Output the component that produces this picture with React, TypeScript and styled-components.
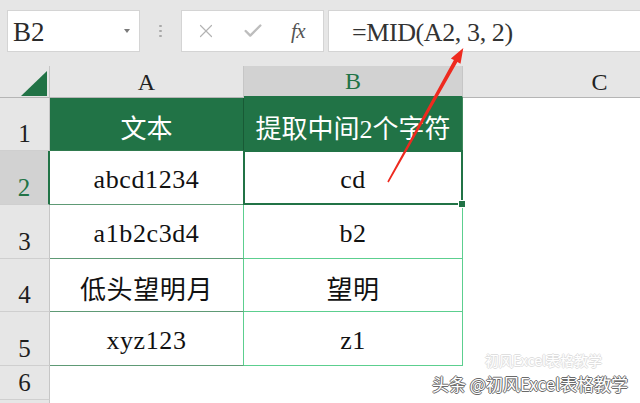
import React from "react";
import styled, { createGlobalStyle } from "styled-components";
import { X, Check } from "lucide-react";

const Global = createGlobalStyle`
  html, body { margin: 0; padding: 0; background: #ffffff; }
  body { font-family: "Liberation Serif", "Noto Sans CJK SC", serif; }
`;

const GREEN = "#217346";
const A_LINE = "#5e9a75";
const B_LINE = "#5ccf8f";
const HDR_BG = "#e6e6e6";
const HDR_SEL = "#d2d2d2";
const HDR_LINE = "#c6c6c6";

const Page = styled.div`
  position: relative;
  width: 640px;
  height: 403px;
  overflow: hidden;
  background: #fff;
`;

const Toolbar = styled.div`
  height: 66px;
  background: ${HDR_BG};
  display: flex;
  align-items: flex-start;
  padding: 10px 0 0 7px;
  box-sizing: border-box;
`;

const Box = styled.div<{ $w: number }>`
  width: ${(p) => p.$w}px;
  height: 42px;
  box-sizing: border-box;
  background: #fff;
  border: 1px solid #d4d4d4;
  display: flex;
  align-items: center;
  flex-shrink: 0;
`;

const NameText = styled.span`
  flex: 1;
  padding-left: 5px;
  padding-top: 3px;
  font-family: "Liberation Serif", serif;
  font-size: 27px;
  color: #2a2a2a;
`;

const Caret = styled.span`
  width: 0;
  height: 0;
  border-left: 3.5px solid transparent;
  border-right: 3.5px solid transparent;
  border-top: 4px solid #7a7a7a;
  margin-right: 9px;
`;

const Dots = styled.div`
  width: 41px;
  height: 42px;
  display: flex;
  flex-direction: column;
  align-items: center;
  justify-content: center;
  gap: 2.5px;
  flex-shrink: 0;
  & > span {
    width: 2.5px;
    height: 2.5px;
    border-radius: 50%;
    background: #a9a9a9;
  }
`;

const IconSlot = styled.div<{ $w: number }>`
  width: ${(p) => p.$w}px;
  display: flex;
  justify-content: center;
  align-items: center;
`;

const Fx = styled.span`
  font-family: "Liberation Serif", serif;
  font-style: italic;
  font-size: 21px;
  color: #555;
  letter-spacing: -0.5px;
`;

const Gap = styled.div`
  width: 4px;
  flex-shrink: 0;
`;

const FormulaText = styled.span`
  padding-left: 23px;
  padding-top: 4px;
  font-family: "Liberation Serif", serif;
  font-size: 26px;
  letter-spacing: -0.4px;
  color: #333;
  white-space: nowrap;
`;

const Sheet = styled.div`
  display: grid;
  grid-template-columns: 50px 194px 219px 274px;
  grid-template-rows: 32px 53px 54px 54px 53px 54px 34px 20px;
`;

const Corner = styled.div`
  background: ${HDR_BG};
  border-right: 1px solid ${HDR_LINE};
  border-bottom: 1px solid #b5b5b5;
  box-sizing: border-box;
  display: flex;
  justify-content: flex-end;
  align-items: flex-end;
  padding: 0 2px 1px 0;
`;

const Triangle = styled.div`
  width: 26px;
  height: 25px;
  background: ${GREEN};
  clip-path: polygon(100% 0, 100% 100%, 0 100%);
`;

const ColHead = styled.div<{ $sel?: boolean }>`
  background: ${(p) => (p.$sel ? HDR_SEL : HDR_BG)};
  border-right: 1px solid ${HDR_LINE};
  border-bottom: ${(p) => (p.$sel ? `2px solid ${GREEN}` : "1px solid #b5b5b5")};
  box-sizing: border-box;
  display: flex;
  justify-content: center;
  align-items: flex-end;
  font-size: 24px;
  line-height: 24px;
  padding-bottom: 3px;
  color: ${(p) => (p.$sel ? GREEN : "#222")};
`;

const RowHead = styled.div<{ $sel?: boolean }>`
  background: ${(p) => (p.$sel ? HDR_SEL : HDR_BG)};
  border-right: ${(p) => (p.$sel ? `2px solid ${GREEN}` : `1px solid ${HDR_LINE}`)};
  border-bottom: 1px solid #cfcfcf;
  box-sizing: border-box;
  display: flex;
  justify-content: center;
  align-items: flex-end;
  font-size: 25px;
  line-height: 25px;
  padding-bottom: 4px;
  color: ${(p) => (p.$sel ? GREEN : "#1e1e1e")};
`;

const HeadCell = styled.div<{ $last?: boolean }>`
  background: ${GREEN};
  border-right: 1px solid ${(p) => (p.$last ? "#3f8a5d" : "#185a35")};
  border-bottom: 1px solid #2f7a4e;
  box-sizing: border-box;
  display: flex;
  justify-content: center;
  align-items: center;
  padding-top: 4px;
  font-size: 26px;
  color: #fff;
  white-space: nowrap;
`;

const BodyCell = styled.div<{ $col: "A" | "B"; $sel?: boolean }>`
  position: relative;
  background: #fff;
  border-right: 1px solid ${B_LINE};
  border-bottom: 1px solid ${(p) => (p.$col === "A" ? A_LINE : B_LINE)};
  box-sizing: border-box;
  display: flex;
  justify-content: center;
  align-items: center;
  padding-top: 4px;
  font-size: 26px;
  letter-spacing: 0.6px;
  color: #111;
  white-space: nowrap;
  ${(p) =>
    p.$sel &&
    `
    &::after {
      content: "";
      position: absolute;
      top: -1px; left: -1px; right: -1px; bottom: -1px;
      border: 2px solid ${GREEN};
    }
  `}
`;

const Handle = styled.span`
  position: absolute;
  right: -4px;
  bottom: -4px;
  width: 6px;
  height: 6px;
  background: ${GREEN};
  border: 1px solid #fff;
  z-index: 2;
`;

const Blank = styled.div`
  background: #fff;
`;

const Overlay = styled.svg`
  position: absolute;
  left: 0;
  top: 0;
  pointer-events: none;
`;

const Watermark = styled.div`
  position: absolute;
  right: 12px;
  bottom: 10px;
  font-family: "Noto Sans CJK SC", "Liberation Sans", sans-serif;
  font-size: 17px;
  line-height: 18px;
  color: #fff;
  white-space: nowrap;
  text-shadow: 1px 0 0 #6a6a6a, -1px 0 0 #6a6a6a, 0 1px 0 #6a6a6a, 0 -1px 0 #6a6a6a;
`;

const Ghost = styled.div`
  position: absolute;
  right: 38px;
  bottom: 36px;
  font-family: "Noto Sans CJK SC", "Liberation Sans", sans-serif;
  font-size: 14px;
  line-height: 14px;
  color: #fff;
  white-space: nowrap;
  opacity: 0.3;
  text-shadow: 1px 0 0 #999, -1px 0 0 #999, 0 1px 0 #999, 0 -1px 0 #999;
`;

const rows = [
  { n: 2, a: "abcd1234", b: "cd" },
  { n: 3, a: "a1b2c3d4", b: "b2" },
  { n: 4, a: "低头望明月", b: "望明" },
  { n: 5, a: "xyz123", b: "z1" },
];

export default function App() {
  return (
    <Page>
      <Global />
      <Toolbar>
        <Box $w={133}>
          <NameText>B2</NameText>
          <Caret />
        </Box>
        <Dots>
          <span />
          <span />
          <span />
        </Dots>
        <Box $w={143}>
          <IconSlot $w={48}>
            <X size={22} strokeWidth={1.3} color="#b3b3b3" />
          </IconSlot>
          <IconSlot $w={46}>
            <Check size={22} strokeWidth={2.6} color="#bdbdbd" />
          </IconSlot>
          <IconSlot $w={44}>
            <Fx>fx</Fx>
          </IconSlot>
        </Box>
        <Gap />
        <Box $w={320}>
          <FormulaText>=MID(A2, 3, 2)</FormulaText>
        </Box>
      </Toolbar>
      <Sheet>
        <Corner>
          <Triangle />
        </Corner>
        <ColHead>A</ColHead>
        <ColHead $sel>B</ColHead>
        <ColHead>C</ColHead>

        <RowHead>1</RowHead>
        <HeadCell>文本</HeadCell>
        <HeadCell $last>提取中间2个字符</HeadCell>
        <Blank />

        {rows.map((r) => (
          <React.Fragment key={r.n}>
            <RowHead $sel={r.n === 2}>{r.n}</RowHead>
            <BodyCell $col="A">{r.a}</BodyCell>
            <BodyCell $col="B" $sel={r.n === 2}>
              {r.b}
              {r.n === 2 && <Handle />}
            </BodyCell>
            <Blank />
          </React.Fragment>
        ))}

        <RowHead>6</RowHead>
        <Blank />
        <Blank />
        <Blank />
        <RowHead />
        <Blank />
        <Blank />
        <Blank />
      </Sheet>

      <Overlay width="640" height="403" viewBox="0 0 640 403">
        <polygon
          points="463.3,48 460.5,63.8 457.4,62.1 388.7,182.4 387.3,181.6 453.9,60.1 450.9,58.4"
          fill="#ee2a1f"
        />
      </Overlay>
      <Ghost>初风Excel表格教学</Ghost>
      <Watermark>头条 @初风Excel表格教学</Watermark>
    </Page>
  );
}
